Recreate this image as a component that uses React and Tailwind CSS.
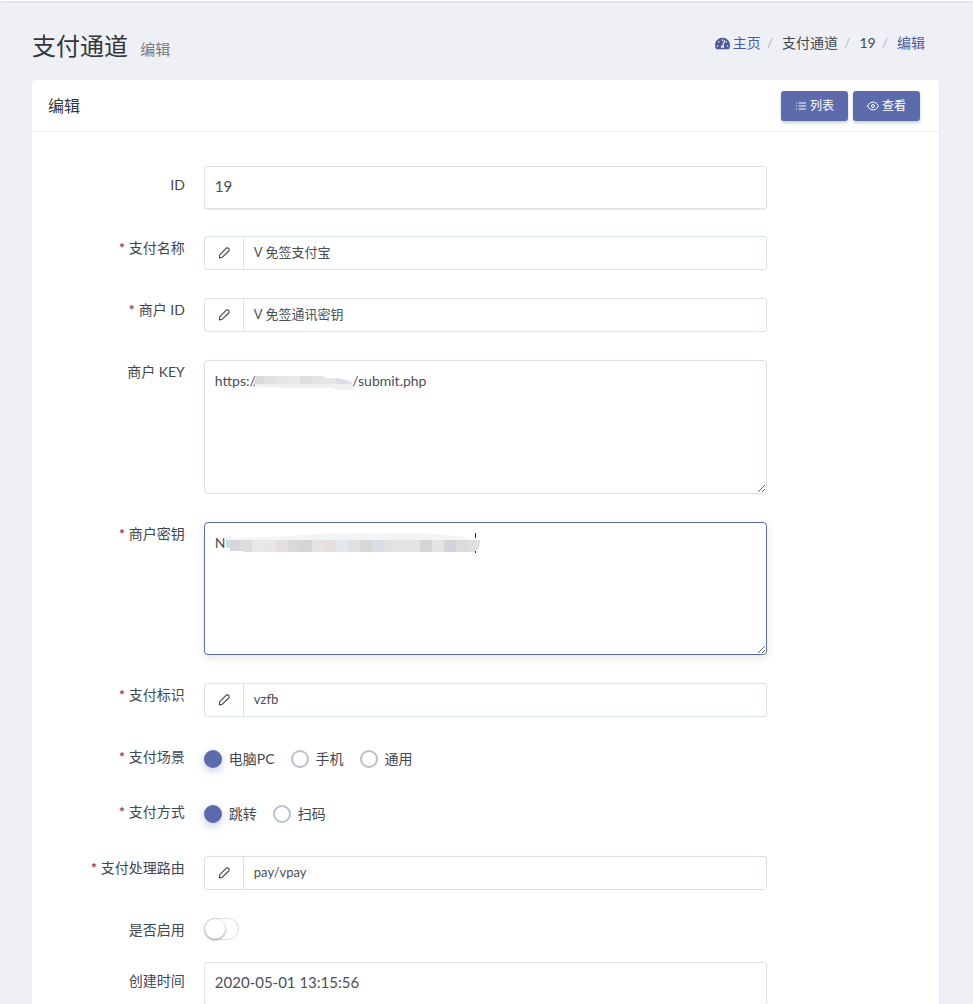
import { FiList, FiEye } from "react-icons/fi";
import { FaTachometerAlt } from "react-icons/fa";

function PencilIcon() {
  return (
    <svg width="12" height="12" viewBox="0 0 12 12" fill="none" stroke="currentColor" strokeWidth="1.1" strokeLinejoin="round" aria-hidden="true">
      <path d="M8 1.4a1.7 1.7 0 0 1 2.700 2.600L4.400 10.200 1.400 10.900 1.700 7.800z" />
    </svg>
  );
}

function Row({ id, label, required, tall, gap = "mb-7", group, children }) {
  const LabelTag = group ? "span" : "label";
  return (
    <div className={`grid grid-cols-12 ${gap}`} role={group ? "radiogroup" : undefined} aria-labelledby={group ? id : undefined}>
      <LabelTag
        id={group ? id : undefined}
        htmlFor={group ? undefined : id}
        className={`col-span-2 pr-[5px] text-right text-sm leading-6 text-[#414750] ${tall ? "pt-[7px]" : ""}`}
      >
        {required && <span className="mr-1 font-bold text-[#a8352f]">*</span>}
        {label}
      </LabelTag>
      <div className="col-span-8 px-[14px]">{children}</div>
    </div>
  );
}

function IconInput({ id, value }) {
  return (
    <div className="flex h-[34px] rounded-[3px] border border-[#dbe2e3] bg-white">
      <span className="flex w-[39px] items-center justify-center border-r border-[#dbe2e3] text-[#414750]">
        <PencilIcon />
      </span>
      <input
        id={id}
        defaultValue={value}
        className="min-w-0 flex-1 bg-transparent px-[10px] text-[13px] text-[#4a4f58] outline-none"
      />
    </div>
  );
}

function ReadonlyInput({ id, value }) {
  return (
    <input
      id={id}
      readOnly
      defaultValue={value}
      className="block h-[43px] w-full rounded-[3px] border border-[#dfe3e5] bg-white px-[10px] pb-1 text-[15px] text-[#4a4f58] shadow-[0_1px_1px_rgba(0,0,0,0.08)] outline-none"
    />
  );
}

function Radios({ name, options }) {
  return (
    <div className="flex h-7 items-center gap-4">
      {options.map((option, i) => (
        <label key={option} className="flex items-center gap-[7px] text-sm text-[#414750]">
          <input
            type="radio"
            name={name}
            defaultChecked={i === 0}
            className="size-[18px] appearance-none rounded-full border-2 border-[#b8c2cc] bg-white checked:border-[#5c6bac] checked:bg-[#5c6bac] checked:shadow-[0_3px_8px_rgba(92,107,172,0.35)]"
          />
          {option}
        </label>
      ))}
    </div>
  );
}

const URL_TILES = ["#d9d9dc", "#e2e2e4", "#e6e6e8", "#e9e9e9", "#dededf", "#e3e3e5", "#e6e6e7", "#dddbe3", "#e4e5e9"];

function UrlMask() {
  return (
    <svg className="pointer-events-none absolute left-[50px] top-[14px]" width="100" height="18" viewBox="0 0 100 18" aria-hidden="true">
      <clipPath id="url-mask">
        <path d="M4 2H68L73 4H84L98 8V16H83L78 14H42L4 13L0 10Z" />
      </clipPath>
      <g clipPath="url(#url-mask)">
        <rect width="100" height="18" fill="#eff0f1" />
        {URL_TILES.map((fill, i) => (
          <rect key={i} x={i * 12 - 2} y="0" width="12" height="10" fill={fill} />
        ))}
      </g>
    </svg>
  );
}

const SECRET_TILES = [
  "#d6d8d8", "#dcdcdd", "#e8e8e6", "#e5e7e9", "#e4dfdf", "#d8d9db", "#d5d5d8", "#e4e4e6", "#e5e0dd", "#e4e8eb", "#e0e0e2",
  "#d8d7d6", "#dadde1", "#e1e3e2", "#e3e4e6", "#e2e4e5", "#d5d6d8", "#e1e4e3", "#d3d4d9", "#dcdcdd", "#dfe0e1",
];

function SecretMask() {
  return (
    <svg className="pointer-events-none absolute left-[21px] top-[10px]" width="256" height="22" viewBox="0 0 256 22" aria-hidden="true">
      <clipPath id="secret-mask">
        <path d="M1 5L6 4L12 7L24 5L68 4L88 2L126 1H202L216 3L234 4L246 7L255 8L254 16L250 20H18V19H5V16L1 15Z" />
      </clipPath>
      <g clipPath="url(#secret-mask)">
        <rect width="256" height="22" fill="#f3f4f4" />
        {SECRET_TILES.map((fill, i) => (
          <rect key={i} x={i * 12 + 3} y="8" width="12" height="14" fill={fill} />
        ))}
        <rect x="0" y="8" width="4" height="8" fill="#d4dad4" />
      </g>
      <path d="M250.5 1V6M250.5 19V21" stroke="#222" />
    </svg>
  );
}

const buttonClass =
  "flex h-[30px] items-center gap-[3px] rounded-[3px] bg-[#5c6bac] px-[14px] text-xs text-white shadow-[0_2px_3px_rgba(0,0,0,0.2)]";

const crumbClass = "before:px-1.5 before:text-[#b4b9c2] before:content-['/']";

export default function App() {
  return (
    <div className="min-h-screen bg-[#eff0f6] pl-8 pr-[34px] font-['Lato','Noto_Sans_CJK_SC',sans-serif]">
      <div className="-ml-8 -mr-[34px] h-px bg-white shadow-[0_1px_3px_rgba(0,0,0,0.2)]" />
      <header className="flex items-start justify-between pb-[13px] pt-[27px]">
        <h1 className="text-2xl leading-9 text-[#33373c]">
          支付通道 <small className="ml-1.5 text-[15px] text-[#777]">编辑</small>
        </h1>
        <nav aria-label="breadcrumb" className="pr-[14px] pt-[5px]">
          <ol className="flex text-sm leading-5 text-[#414750]">
            <li>
              <a href="#" className="flex items-center gap-[3px] text-[#4c5a99]">
                <FaTachometerAlt size={15} />
                主页
              </a>
            </li>
            <li className={crumbClass}><span className="pl-[3px]">支付通道</span></li>
            <li className={crumbClass}><span className="pl-[3px]">19</span></li>
            <li className={crumbClass}><span className="pl-[3px] text-[#4c5a99]">编辑</span></li>
          </ol>
        </nav>
      </header>

      <main className="rounded bg-white shadow-[0_1px_3px_rgba(0,0,0,0.04)]">
        <div className="flex h-[52px] items-center justify-between border-b border-[#f0f1f3] pl-4 pr-[19px]">
          <h2 className="text-base text-[#33373c]">编辑</h2>
          <div className="flex gap-[5px]">
            <button type="button" className={buttonClass}><FiList size={12} />列表</button>
            <button type="button" className={buttonClass}><FiEye size={12} />查看</button>
          </div>
        </div>

        <form className="px-[10px] pb-8 pt-[34px]">
          <Row id="record-id" label="ID" tall gap="mb-[27px]">
            <ReadonlyInput id="record-id" value="19" />
          </Row>
          <Row id="pay-name" label="支付名称" required>
            <IconInput id="pay-name" value="V 免签支付宝" />
          </Row>
          <Row id="merchant-id" label="商户 ID" required>
            <IconInput id="merchant-id" value="V 免签通讯密钥" />
          </Row>
          <Row id="merchant-key" label="商户 KEY">
            <div className="relative">
              <textarea
                id="merchant-key"
                defaultValue={"https://" + "\u00a0".repeat(26) + "/submit.php"}
                className="block h-[134px] w-full resize-y rounded-[4px] border border-[#dbe2e3] bg-white px-[10px] py-[10px] text-sm text-[#4a4f58] outline-none"
              />
              <UrlMask />
            </div>
          </Row>
          <Row id="merchant-secret" label="商户密钥" required>
            <div className="relative">
              <textarea
                id="merchant-secret"
                defaultValue="N"
                className="block h-[133px] w-full resize-y rounded-[4px] border border-[#5c6bac] bg-white px-[10px] py-[10px] text-sm text-[#4a4f58] shadow-[0_3px_10px_rgba(0,0,0,0.1)] outline-none"
              />
              <SecretMask />
            </div>
          </Row>
          <Row id="pay-mark" label="支付标识" required>
            <IconInput id="pay-mark" value="vzfb" />
          </Row>
          <Row id="pay-scene" label="支付场景" required group gap="mb-[27px]">
            <Radios name="pay-scene" options={["电脑PC", "手机", "通用"]} />
          </Row>
          <Row id="pay-method" label="支付方式" required group>
            <Radios name="pay-method" options={["跳转", "扫码"]} />
          </Row>
          <Row id="pay-route" label="支付处理路由" required>
            <IconInput id="pay-route" value="pay/vpay" />
          </Row>
          <Row id="enabled" label="是否启用" gap="mb-5">
            <input
              id="enabled"
              type="checkbox"
              role="switch"
              className="block h-[22px] w-[35px] appearance-none rounded-full border border-[#dfdfdf] bg-white before:block before:size-5 before:rounded-full before:bg-white before:shadow-[0_1px_3px_rgba(0,0,0,0.4)] before:content-[''] checked:bg-[#5c6bac] checked:before:ml-[13px]"
            />
          </Row>
          <Row id="created-at" label="创建时间" tall>
            <ReadonlyInput id="created-at" value="2020-05-01 13:15:56" />
          </Row>
        </form>
      </main>
    </div>
  );
}
